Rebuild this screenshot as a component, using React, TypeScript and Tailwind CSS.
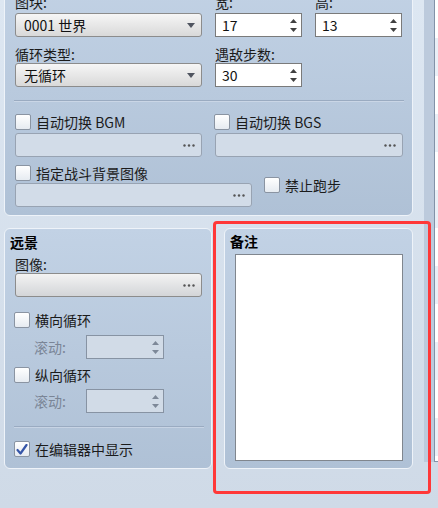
import React from 'react'

const FONT = { fontFamily: '"Microsoft YaHei", "Noto Sans CJK SC", "Noto Sans", sans-serif' }

function DownArrow() {
  return (
    <svg width="8" height="5" viewBox="0 0 8 5"><path d="M0 0 H8 L4 5 Z" fill="#505560" /></svg>
  )
}

function SpinArrows({ disabled }: { disabled?: boolean }) {
  const c = disabled ? '#7d8898' : '#404040'
  return (
    <div className="flex flex-col items-center gap-[5px] mr-[4px]">
      <svg width="7" height="4" viewBox="0 0 7 4"><path d="M0 4 L3.5 0 L7 4 Z" fill={c} /></svg>
      <svg width="7" height="4" viewBox="0 0 7 4"><path d="M0 0 H7 L3.5 4 Z" fill={c} /></svg>
    </div>
  )
}

function Dots() {
  return (
    <svg width="12" height="3" viewBox="0 0 12 3" className="mr-[6px]">
      <circle cx="1.5" cy="1.5" r="1.2" fill="#555" />
      <circle cx="6" cy="1.5" r="1.2" fill="#555" />
      <circle cx="10.5" cy="1.5" r="1.2" fill="#555" />
    </svg>
  )
}

function Label({ children, className = '' }: { children: React.ReactNode; className?: string }) {
  return <div className={`h-[18px] leading-[18px] text-[14px] text-[#1b1b1b] ${className}`}>{children}</div>
}

function Dropdown({ value, w }: { value: string; w: string }) {
  return (
    <div className={`${w} h-[24px] flex items-center justify-between rounded-[3px] border border-[#8c8c8c] bg-gradient-to-b from-[#f6f6f6] to-[#d9d9d9] pl-[8px] pr-[6px]`}>
      <span className="text-[14px] text-[#111] leading-none">{value}</span>
      <DownArrow />
    </div>
  )
}

function Spin({ value, w, disabled }: { value?: string; w: string; disabled?: boolean }) {
  return (
    <div className={`${w} h-[24px] flex items-center justify-between border ${disabled ? 'border-[#8793a3] bg-[#d1dbe7]' : 'border-[#7a7a7a] bg-white'} pl-[6px]`}>
      <span className="text-[14px] text-[#111] leading-none">{value}</span>
      <SpinArrows disabled={disabled} />
    </div>
  )
}

function FileField({ w, enabled }: { w: string; enabled?: boolean }) {
  return (
    <div className={`${w} h-[24px] flex items-center justify-end rounded-[3px] border ${enabled ? 'border-[#8c8c8c] bg-gradient-to-b from-[#f3f3f3] to-[#d3d5d8]' : 'border-[#98a3b2] bg-[#d2dce8]'}`}>
      <Dots />
    </div>
  )
}

function Check({ label, checked, className = '' }: { label: string; checked?: boolean; className?: string }) {
  return (
    <div className={`flex items-center h-[16px] ${className}`}>
      <div className="w-[16px] h-[16px] rounded-[2px] border border-[#8a94a2] bg-gradient-to-b from-[#ffffff] to-[#e6ebf1] flex items-center justify-center">
        {checked && (
          <svg width="12" height="11" viewBox="0 0 12 11">
            <path d="M1.5 6 L4.5 9.5 L10.5 1" stroke="#3656a8" strokeWidth="2.2" fill="none" strokeLinecap="round" strokeLinejoin="round" />
          </svg>
        )}
      </div>
      <span className="ml-[5px] text-[14px] leading-none text-[#1b1b1b]">{label}</span>
    </div>
  )
}

function Separator({ w }: { w: string }) {
  return <div className={`${w} -ml-[1px] h-[2px] border-t border-[#9aabc1] border-b border-b-[#d6e0ec]/60`} />
}

const PANEL = 'rounded-[6px] border border-[#eef3f9] bg-gradient-to-b from-[#c2d2e5] to-[#afc1d6]'

export default function App() {
  return (
    <div style={FONT} className="relative w-[438px] h-[508px] overflow-hidden bg-gradient-to-b from-[#dde7f2] to-[#cfdae7] flex">
      {/* área principal */}
      <div className="w-[424px] pl-[4px] flex flex-col">
        {/* panel superior */}
        <div className={`${PANEL} w-[409px] -mt-[24px] pl-[10px] pt-[16px] pb-[8px] rounded-t-none`}>
          <div className="grid grid-cols-[187px_87px_87px] gap-x-[13px]">
            <Label>图块:</Label>
            <Label>宽:</Label>
            <Label>高:</Label>
            <div className="mt-[2px]"><Dropdown value="0001 世界" w="w-[187px]" /></div>
            <div className="mt-[2px]"><Spin value="17" w="w-[87px]" /></div>
            <div className="mt-[2px]"><Spin value="13" w="w-[87px]" /></div>
            <Label className="mt-[8px]">循环类型:</Label>
            <Label className="mt-[8px]">遇敌步数:</Label>
            <div />
            <Dropdown value="无循环" w="w-[187px]" />
            <Spin value="30" w="w-[87px]" />
            <div />
          </div>
          <div className="mt-[13px]"><Separator w="w-[390px]" /></div>
          <div className="flex gap-x-[13px] mt-[12px]">
            <div>
              <Check label="自动切换 BGM" />
              <div className="mt-[3px]"><FileField w="w-[187px]" /></div>
            </div>
            <div className="-ml-[1px]">
              <Check label="自动切换 BGS" />
              <div className="mt-[3px] ml-[1px]"><FileField w="w-[188px]" /></div>
            </div>
          </div>
          <div className="flex mt-[8px]">
            <div>
              <Check label="指定战斗背景图像" />
              <div className="mt-[2px]"><FileField w="w-[237px]" /></div>
            </div>
            <Check label="禁止跑步" className="ml-[12px] mt-[12px]" />
          </div>
        </div>

        {/* paneles inferiores */}
        <div className="flex gap-x-[12px] mt-[12px]">
          <div className={`${PANEL} w-[208px] h-[241px] pl-[10px] pt-[4px]`}>
            <div className="h-[18px] leading-[18px] text-[14px] font-bold text-black -ml-[5px]">远景</div>
            <Label className="mt-[4px]">图像:</Label>
            <FileField w="w-[187px]" enabled />
            <Check label="横向循环" className="mt-[15px] -ml-[1px]" />
            <div className="flex items-center mt-[7px]">
              <span className="w-[71px] pl-[19px] text-[14px] text-[#7a8596]">滚动:</span>
              <Spin w="w-[78px]" disabled />
            </div>
            <Check label="纵向循环" className="mt-[8px] -ml-[1px]" />
            <div className="flex items-center mt-[6px]">
              <span className="w-[71px] pl-[19px] text-[14px] text-[#7a8596]">滚动:</span>
              <Spin w="w-[78px]" disabled />
            </div>
            <div className="mt-[13px]"><Separator w="w-[190px]" /></div>
            <Check label="在编辑器中显示" checked className="mt-[13px] -ml-[1px]" />
          </div>

          <div className={`${PANEL} w-[189px] h-[241px] pl-[5px] pt-[3px]`}>
            <div className="h-[18px] leading-[18px] text-[14px] font-bold text-black">备注</div>
            <div className="ml-[5px] mt-[4px] w-[168px] h-[207px] bg-white border border-[#80868e]" />
          </div>
        </div>
      </div>

      {/* lista lateral */}
      <div className="flex h-[462px]">
        <div className="w-[10px] bg-[#bccadc]" />
        <div className="w-[4px] border-l border-b border-[#8292a8] bg-white flex flex-col">
          {Array.from({ length: 12 }).map((_, i) => (
            <div key={i} className={`h-[38px] ${i % 2 ? 'bg-[#e9eff6]' : 'bg-white'}`} />
          ))}
        </div>
      </div>

      {/* marco rojo */}
      <div className="absolute left-[213px] top-[221px] w-[218px] h-[273px] border-[3px] border-[#ff3838] rounded-[4px]" />
    </div>
  )
}
